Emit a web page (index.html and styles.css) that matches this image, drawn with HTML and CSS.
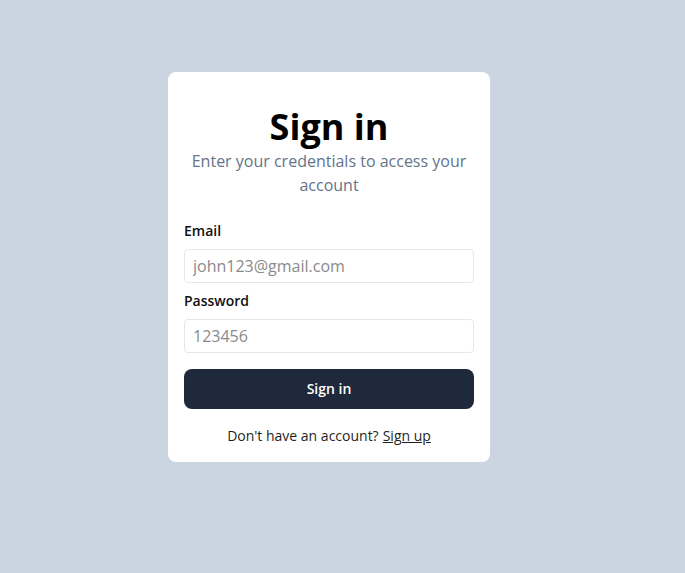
FILE: index.html
```html
<!DOCTYPE html>
<html lang="en">
<head>
  <meta charset="UTF-8" />
  <meta name="viewport" content="width=device-width, initial-scale=1.0"/>
  <title>Sign in</title>
  <link rel="stylesheet" href="styles.css">
</head>
<body>
  <div class="page">
    <div class="card">
      <h1 class="heading">Sign in</h1>
      <p class="subheading">Enter your credentials to access your account</p>

      <label class="label" for="email">Email</label>
      <input class="input" id="email" type="text" placeholder="john123@gmail.com">

      <label class="label" for="password">Password</label>
      <input class="input" id="password" type="password" placeholder="123456">

      <div class="button-row">
        <button class="button" type="button">Sign in</button>
      </div>

      <div class="warning">
        <span>Don't have an account?</span>
        <a class="link" href="#">Sign up</a>
      </div>
    </div>
  </div>
</body>
</html>
```

FILE: styles.css
```css
* {
  margin: 0;
  padding: 0;
  box-sizing: border-box;
}

body {
  height: 100vh;
  background-color: #cbd5e1;
  font-family: 'Open Sans', 'Noto Sans', sans-serif;
  color: #111111;
}

.page {
  display: flex;
  justify-content: center;
  padding: 72px 27px 0 0;
}

.card {
  width: 322px;
  padding: 8px 16px;
  background-color: #ffffff;
  border-radius: 8px;
  text-align: center;
}

.heading {
  padding-top: 27px;
  font-size: 36px;
  line-height: 40px;
  font-weight: 700;
  color: #000000;
}

.subheading {
  padding: 2px 4px 16px;
  font-size: 16px;
  line-height: 24px;
  color: #64748b;
}

.label {
  display: block;
  padding: 8px 0;
  font-size: 14px;
  line-height: 20px;
  font-weight: 600;
  text-align: left;
}

.input {
  display: block;
  width: 100%;
  padding: 4px 8px;
  border: 1px solid #e2e8f0;
  border-radius: 4px;
  font-family: inherit;
  font-size: 16px;
  line-height: 24px;
  color: #111111;
  outline: none;
}

.input::placeholder {
  color: #8a8a8a;
}

.button-row {
  padding-top: 16px;
}

.button {
  width: 100%;
  margin-bottom: 9px;
  padding: 10px 20px;
  border: none;
  border-radius: 8px;
  background-color: #1e293b;
  color: #ffffff;
  font-family: inherit;
  font-size: 14px;
  line-height: 20px;
  font-weight: 600;
  cursor: pointer;
}

.warning {
  display: flex;
  justify-content: center;
  gap: 4px;
  padding: 8px 0;
  font-size: 14px;
  line-height: 20px;
  color: #1f1f1f;
}

.link {
  color: #1f1f1f;
  text-decoration: underline;
}
```
